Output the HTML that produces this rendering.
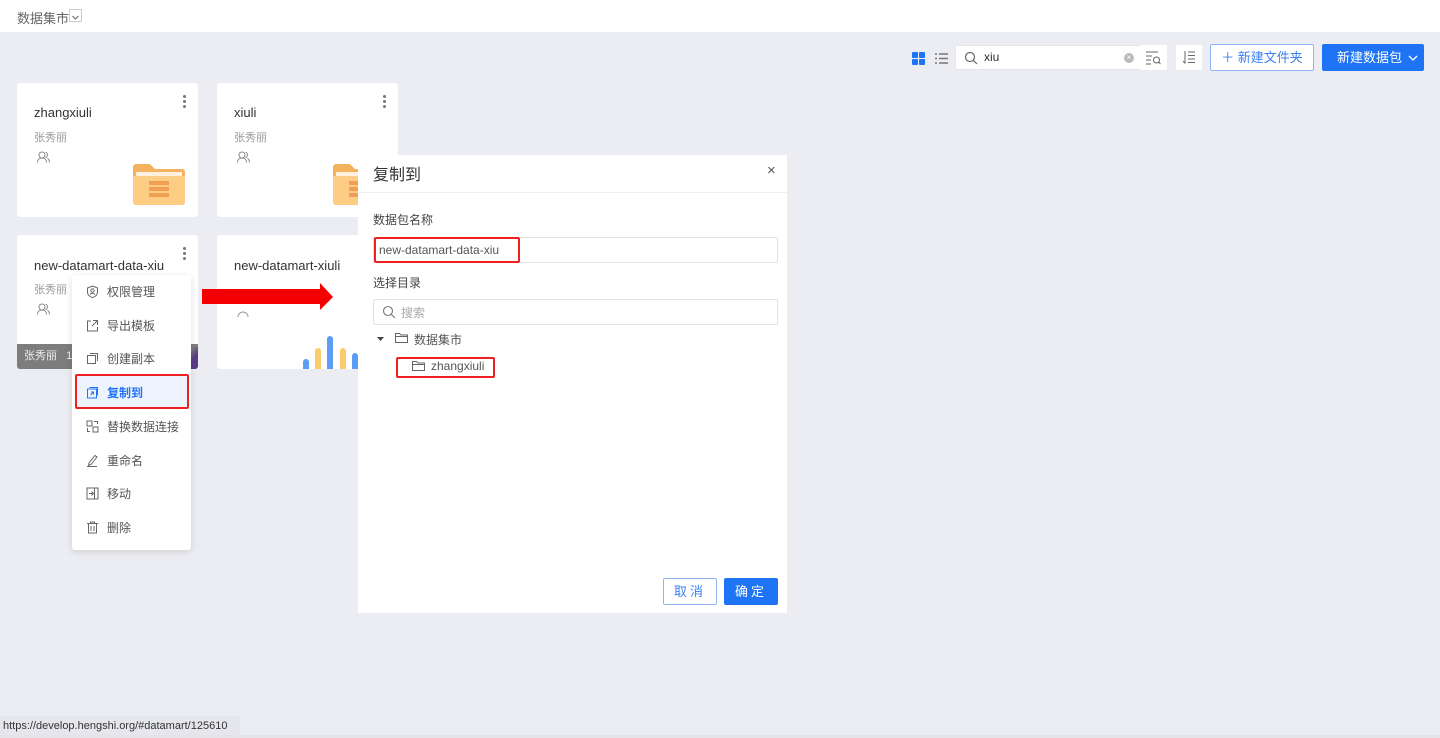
<!DOCTYPE html>
<html><head><meta charset="utf-8"><style>
*{box-sizing:border-box;margin:0;padding:0}
body{width:1440px;height:738px;background:#ecedf2;font-family:"Liberation Sans","Noto Sans CJK SC",sans-serif;position:relative;overflow:hidden;color:#333}
.a{position:absolute}
.card{position:absolute;background:#fff;border-radius:3px;width:181px;height:134px;overflow:hidden}
.card .t{position:absolute;left:17px;top:22px;font-size:13px;color:#333}
.card .s{position:absolute;left:17px;top:46px;font-size:11px;color:#999}
.card .u{position:absolute;left:20px;top:68px}
.dots{position:absolute;right:12px;top:12px;width:3px}
.dots i{display:block;width:3px;height:3px;border-radius:50%;background:#777;margin-bottom:2px}
.mi{position:absolute;left:14px;font-size:12px;color:#555;display:flex;align-items:center}
.mi svg{margin-right:8px}
</style></head><body>
<div class="a" style="left:0;top:0;width:1440px;height:32px;background:#fff"></div>
<div class="a" style="left:17px;top:8px;font-size:13px;color:#666">数据集市</div>
<div class="a" style="left:69px;top:9px;width:13px;height:13px;border:1px solid #ccc;background:#fff"><svg width="11" height="11"><path d="M2.5 4l3 3 3-3" stroke="#666" fill="none"/></svg></div>

<!-- toolbar -->
<svg class="a" style="left:912px;top:52px" width="13" height="13"><rect x="0" y="0" width="6" height="6" rx="1" fill="#1f74f5"/><rect x="7" y="0" width="6" height="6" rx="1" fill="#1f74f5"/><rect x="0" y="7" width="6" height="6" rx="1" fill="#1f74f5"/><rect x="7" y="7" width="6" height="6" rx="1" fill="#1f74f5"/></svg>
<svg class="a" style="left:935px;top:52px" width="13" height="13" stroke="#777" stroke-width="1.6"><path d="M0 2h2M4 2h9M0 6.5h2M4 6.5h9M0 11h2M4 11h9"/></svg>
<div class="a" style="left:955px;top:45px;width:187px;height:25px;background:#fff;border:1px solid #e6e6ea;border-radius:2px"></div>
<svg class="a" style="left:964px;top:51px" width="14" height="14" fill="none" stroke="#666" stroke-width="1.2"><circle cx="6" cy="6" r="4.5"/><path d="M9.5 9.5l3.5 3.5"/></svg>
<div class="a" style="left:984px;top:50px;font-size:12px;color:#333">xiu</div>
<div class="a" style="left:1124px;top:53px;width:10px;height:10px;border-radius:50%;background:#bbb;color:#fff;font-size:8px;line-height:10px;text-align:center">×</div>
<div class="a" style="left:1140px;top:45px;width:27px;height:25px;background:#fff"></div>
<svg class="a" style="left:1146px;top:51px" width="16" height="14" stroke="#666" stroke-width="1" fill="none"><path d="M0 1h12M0 5h6M0 9h5M0 13h5"/><circle cx="10.5" cy="9" r="3"/><path d="M12.5 11l2 2"/></svg>
<div class="a" style="left:1176px;top:45px;width:26px;height:25px;background:#fff"></div>
<svg class="a" style="left:1182px;top:50px" width="14" height="15" stroke="#666" stroke-width="1" fill="none"><path d="M3 1v12M1 11l2 2.5M6 2h7M6 5.5h7M6 9h7M6 12.5h7"/></svg>
<div class="a" style="left:1210px;top:44px;width:104px;height:27px;background:#fff;border:1px solid #8fb5f7;border-radius:2px;color:#3c80f3;font-size:13px;line-height:25px;text-align:center">＋ 新建文件夹</div>
<div class="a" style="left:1322px;top:44px;width:102px;height:27px;background:#1f74f5;border-radius:2px;color:#fff;font-size:13px;line-height:27px;padding-left:15px">新建数据包 <svg width="10" height="8" style="margin-left:2px"><path d="M1 2l4 4 4-4" stroke="#fff" fill="none" stroke-width="1.3"/></svg></div>

<!-- cards -->
<div class="card" style="left:17px;top:83px"><div class="t">zhangxiuli</div><div class="s">张秀丽</div>
<svg class="u" width="13" height="12" fill="none" stroke="#888"><circle cx="5" cy="4" r="3"/><path d="M0.5 11.5c0-3 2-4.5 4.5-4.5s4.5 1.5 4.5 4.5M8.5 1.2a3 3 0 010 5.6M10.5 7.5c1.2.6 2 2 2 4"/></svg>
<div class="dots"><i></i><i></i><i></i></div>
<svg class="a" style="left:116px;top:80px" width="52" height="42"><path d="M0 4a3 3 0 013-3h14l5 5h27a3 3 0 013 3v30a3 3 0 01-3 3H3a3 3 0 01-3-3z" fill="#f5b25e"/><rect x="3" y="9" width="46" height="6" fill="#fdf0dc"/><path d="M0 13h52v26a3 3 0 01-3 3H3a3 3 0 01-3-3z" fill="#fdcd86"/><rect x="16" y="18" width="20" height="4" fill="#f19f52"/><rect x="16" y="24" width="20" height="4" fill="#f19f52"/><rect x="16" y="30" width="20" height="4" fill="#f19f52"/></svg></div>
<div class="card" style="left:217px;top:83px"><div class="t">xiuli</div><div class="s">张秀丽</div>
<svg class="u" width="13" height="12" fill="none" stroke="#888"><circle cx="5" cy="4" r="3"/><path d="M0.5 11.5c0-3 2-4.5 4.5-4.5s4.5 1.5 4.5 4.5M8.5 1.2a3 3 0 010 5.6M10.5 7.5c1.2.6 2 2 2 4"/></svg>
<div class="dots"><i></i><i></i><i></i></div>
<svg class="a" style="left:116px;top:80px" width="52" height="42"><path d="M0 4a3 3 0 013-3h14l5 5h27a3 3 0 013 3v30a3 3 0 01-3 3H3a3 3 0 01-3-3z" fill="#f5b25e"/><rect x="3" y="9" width="46" height="6" fill="#fdf0dc"/><path d="M0 13h52v26a3 3 0 01-3 3H3a3 3 0 01-3-3z" fill="#fdcd86"/><rect x="16" y="18" width="20" height="4" fill="#f19f52"/><rect x="16" y="24" width="20" height="4" fill="#f19f52"/><rect x="16" y="30" width="20" height="4" fill="#f19f52"/></svg></div>
<div class="card" style="left:17px;top:235px"><div class="t" style="top:23px">new-datamart-data-xiu</div><div class="s">张秀丽</div>
<svg class="u" width="13" height="12" fill="none" stroke="#888"><circle cx="5" cy="4" r="3"/><path d="M0.5 11.5c0-3 2-4.5 4.5-4.5s4.5 1.5 4.5 4.5M8.5 1.2a3 3 0 010 5.6M10.5 7.5c1.2.6 2 2 2 4"/></svg>
<div class="dots"><i></i><i></i><i></i></div>
<div class="a" style="left:0;top:109px;width:181px;height:25px;background:#7d7d7d;color:#eee;font-size:11px;line-height:25px;padding-left:7px">张秀丽 &nbsp; 12</div>
<div class="a" style="left:165px;top:112px;width:16px;height:22px;background:linear-gradient(135deg,#7d7d7d 30%,#5a3d86 60%)"></div></div>
<div class="card" style="left:217px;top:235px"><div class="t" style="top:23px">new-datamart-xiuli</div>
<svg class="a" style="left:20px;top:76px" width="12" height="6"><path d="M1 6a5 5 0 0110 0" stroke="#999" fill="none"/></svg>
<div class="a" style="left:86px;top:124px;width:6px;height:10px;border-radius:3px 3px 0 0;background:#5b9cf5"></div>
<div class="a" style="left:98px;top:113px;width:6px;height:21px;border-radius:3px 3px 0 0;background:#fbcd6a"></div>
<div class="a" style="left:110px;top:101px;width:6px;height:33px;border-radius:3px 3px 0 0;background:#5b9cf5"></div>
<div class="a" style="left:123px;top:113px;width:6px;height:21px;border-radius:3px 3px 0 0;background:#fbcd6a"></div>
<div class="a" style="left:135px;top:118px;width:6px;height:16px;border-radius:3px 3px 0 0;background:#5b9cf5"></div></div>

<!-- menu -->
<div class="a" style="left:72px;top:275px;width:119px;height:275px;background:#fff;border-radius:3px;box-shadow:0 2px 8px rgba(0,0,0,.12)">
<div class="mi" style="top:8px"><svg width="13" height="13" fill="none" stroke="#666"><path d="M6.5 1l5 2v4c0 3-2.5 5-5 5.5C4 12 1.5 10 1.5 7V3z"/><circle cx="6.5" cy="5.5" r="1.7"/><path d="M4 9.5c1-1.5 4-1.5 5 0"/></svg>权限管理</div>
<div class="mi" style="top:42px"><svg width="13" height="13" fill="none" stroke="#666"><path d="M5 2H1.5v10h10V8M7 1.5h4.5V6M11.5 1.5L6 7"/></svg>导出模板</div>
<div class="mi" style="top:75px"><svg width="13" height="13" fill="none" stroke="#666"><rect x="1.5" y="3.5" width="8" height="8"/><path d="M4 1.5h7.5V9"/></svg>创建副本</div>
<div class="a" style="left:3px;top:99px;width:114px;height:35px;border:2px solid #f02020;border-radius:2px;background:#eef4ff"></div>
<div class="mi" style="top:109px;color:#1f74f5;font-weight:bold"><svg width="13" height="13" fill="none" stroke="#1f74f5"><rect x="1.5" y="3" width="9" height="9"/><path d="M3.5 1.5h8v8M4.5 9l3-3M5 6h2.5v2.5"/></svg>复制到</div>
<div class="mi" style="top:143px"><svg width="13" height="13" fill="none" stroke="#666"><rect x="1" y="1" width="5" height="5"/><rect x="7" y="7" width="5" height="5"/><path d="M8 1.5h3.5V4M1.5 8v3.5H4"/></svg>替换数据连接</div>
<div class="mi" style="top:177px"><svg width="13" height="13" fill="none" stroke="#666"><path d="M3 9l6-7.5 2 1.5-6 7.5-2.5 1zM1 12.5h10"/></svg>重命名</div>
<div class="mi" style="top:210px"><svg width="13" height="13" fill="none" stroke="#666"><rect x="1" y="1" width="11" height="11"/><path d="M8.5 1v11M3 6.5h4M5.5 4.5l2 2-2 2"/></svg>移动</div>
<div class="mi" style="top:244px"><svg width="13" height="13" fill="none" stroke="#666"><path d="M1 2.5h11M4.5 2.5V1h4v1.5M2.5 2.5v9.5h8V2.5M5 5v5M8 5v5"/></svg>删除</div>
</div>

<!-- arrow -->
<svg class="a" style="left:200px;top:280px" width="136" height="34"><path d="M2 9h118V3l13 14-13 13v-6H2z" fill="#f50000"/></svg>

<!-- dialog -->
<div class="a" style="left:358px;top:155px;width:429px;height:458px;background:#fff">
<div class="a" style="left:15px;top:6px;font-size:16px;color:#333">复制到</div>
<div class="a" style="left:409px;top:7px;font-size:15px;color:#555">×</div>
<div class="a" style="left:0;top:37px;width:429px;height:1px;background:#eee"></div>
<div class="a" style="left:15px;top:56px;font-size:12px;color:#444">数据包名称</div>
<div class="a" style="left:15px;top:82px;width:405px;height:26px;border:1px solid #e2e2e6;border-radius:2px"></div>
<div class="a" style="left:16px;top:82px;width:146px;height:26px;border:2px solid #f02020;border-radius:2px"></div>
<div class="a" style="left:21px;top:88px;font-size:12px;color:#555">new-datamart-data-xiu</div>
<div class="a" style="left:15px;top:119px;font-size:12px;color:#444">选择目录</div>
<div class="a" style="left:15px;top:144px;width:405px;height:26px;border:1px solid #e2e2e6;border-radius:2px"></div>
<svg class="a" style="left:24px;top:150px" width="14" height="14" fill="none" stroke="#777" stroke-width="1.1"><circle cx="6" cy="6" r="4.5"/><path d="M9.5 9.5l3.5 3.5"/></svg>
<div class="a" style="left:43px;top:149px;font-size:12px;color:#aaa">搜索</div>
<svg class="a" style="left:19px;top:181px" width="8" height="6"><path d="M0 1h7L3.5 5z" fill="#444"/></svg>
<svg class="a" style="left:37px;top:177px" width="13" height="11" fill="none" stroke="#666"><path d="M.5 1.5h4l1.5 1.5h6.5v7.5H.5zM.5 4.5h12"/></svg>
<div class="a" style="left:56px;top:176px;font-size:12px;color:#555">数据集市</div>
<div class="a" style="left:38px;top:202px;width:99px;height:21px;border:2px solid #f02020;border-radius:2px"></div>
<svg class="a" style="left:54px;top:205px" width="13" height="11" fill="none" stroke="#666"><path d="M.5 1.5h4l1.5 1.5h6.5v7.5H.5zM.5 4.5h12"/></svg>
<div class="a" style="left:73px;top:204px;font-size:12px;color:#555">zhangxiuli</div>
<div class="a" style="left:305px;top:423px;width:54px;height:27px;border:1px solid #8fb5f7;border-radius:2px;color:#3c80f3;font-size:13px;line-height:25px;text-align:center;letter-spacing:3px">取消</div>
<div class="a" style="left:366px;top:423px;width:54px;height:27px;background:#1f74f5;border-radius:2px;color:#fff;font-size:13px;line-height:27px;text-align:center;letter-spacing:3px">确定</div>
</div>

<!-- status -->
<div class="a" style="left:0;top:716px;width:240px;height:20px;background:#e6e7ec;border-radius:0 3px 0 0;font-size:11px;color:#333;line-height:20px;padding-left:3px">https://develop.hengshi.org/#datamart/125610</div>
<div class="a" style="left:0;top:735px;width:1440px;height:3px;background:#e3e3e8"></div>
</body></html>
